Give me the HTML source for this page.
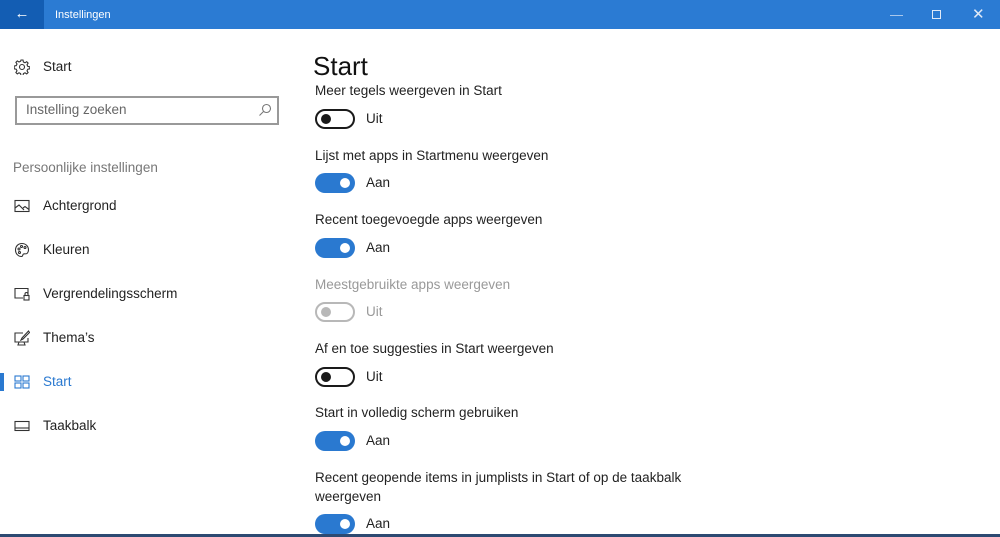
<!DOCTYPE html>
<html><head><meta charset="utf-8"><style>
*{margin:0;padding:0;box-sizing:border-box}
body{width:1000px;height:537px;overflow:hidden;background:#fff;font-family:"Liberation Sans",sans-serif;color:#222;position:relative}
.bar{position:absolute;left:0;top:0;width:1000px;height:29px;background:#2b7bd3}
.back{position:absolute;left:0;top:0;width:44px;height:29px;background:#135db3;color:#fff;font-size:15px;text-align:center;line-height:28px}
.title{position:absolute;left:55px;top:9px;color:#fff;font-size:11px}
.wc{position:absolute;top:0;height:29px;color:#dfe9f7;font-size:13px;line-height:29px}
.t{position:absolute;font-size:13.5px;white-space:nowrap}
.ic{position:absolute;left:14px}
.tg{position:absolute;left:315px;width:40px;height:20px;border-radius:10px}
.on{background:#2a79d0}
.on::after{content:"";position:absolute;right:5px;top:5px;width:10px;height:10px;border-radius:50%;background:#fff}
.off{border:2px solid #1a1a1a}
.off::after{content:"";position:absolute;left:4px;top:3px;width:10px;height:10px;border-radius:50%;background:#1a1a1a}
.dis{border:2px solid #b8b8b8}
.dis::after{content:"";position:absolute;left:4px;top:3px;width:10px;height:10px;border-radius:50%;background:#b8b8b8}
.st{position:absolute;left:366px;font-size:13.5px}
</style></head><body>
<div class="bar"></div>
<div class="back">&#8592;</div>
<div class="title">Instellingen</div>
<div class="wc" style="left:890px;color:#b9d2f0">&#8212;</div>
<div class="wc" style="left:932px;top:0"><div style="position:absolute;top:10px;left:0;width:9px;height:9px;border:1px solid #dfe9f7"></div></div>
<div class="wc" style="left:972px;font-size:15px">&#10005;</div>

<svg class="ic" style="top:59px" width="16" height="16" viewBox="0 0 16 16" fill="none" stroke="#333" stroke-width="1.1"><circle cx="8" cy="8" r="2.5"/><path d="M7 1h2l.4 2 1.6.8 1.7-1.1 1.4 1.4-1.1 1.7.8 1.6 2 .4v2l-2 .4-.8 1.6 1.1 1.7-1.4 1.4-1.7-1.1-1.6.8-.4 2H7l-.4-2-1.6-.8-1.7 1.1-1.4-1.4 1.1-1.7-.8-1.6-2-.4V7l2-.4.8-1.6-1.1-1.7 1.4-1.4 1.7 1.1 1.6-.8z"/></svg>
<div class="t" style="left:43px;top:59px">Start</div>
<div style="position:absolute;left:15px;top:96px;width:264px;height:29px;border:2px solid #999"></div>
<div class="t" style="left:26px;top:102px;color:#666">Instelling zoeken</div>
<svg style="position:absolute;left:258px;top:103px" width="14" height="14" viewBox="0 0 14 14" fill="none" stroke="#777" stroke-width="1.1"><circle cx="8.5" cy="5.5" r="4"/><path d="M5.5 8.5 1.5 12.5"/></svg>
<div class="t" style="left:13px;top:160px;color:#777">Persoonlijke instellingen</div>

<svg class="ic" style="top:199px" width="16" height="14" viewBox="0 0 16 14" fill="none" stroke="#333" stroke-width="1.1"><rect x="1" y="1.5" width="14" height="11"/><path d="M1 9l4-3 5 5M9 9l2-1.5 4 3"/></svg>
<div class="t" style="left:43px;top:198px">Achtergrond</div>
<svg class="ic" style="top:242px" width="16" height="16" viewBox="0 0 16 16" fill="none" stroke="#333" stroke-width="1.1"><path d="M8 1.5C4 1.5 1.5 4.5 1.5 8S4 14.5 7.5 14.5c1.5 0 1-2 2-2.5s3 .5 4-1 1-3 1-3C14.5 4 11.5 1.5 8 1.5z"/><circle cx="5" cy="7" r="1"/><circle cx="7.5" cy="4.5" r="1"/><circle cx="11" cy="5.5" r="1"/><circle cx="5.5" cy="10.5" r="1"/></svg>
<div class="t" style="left:43px;top:242px">Kleuren</div>
<svg class="ic" style="top:287px" width="16" height="14" viewBox="0 0 16 14" fill="none" stroke="#333" stroke-width="1.1"><path d="M9 11H1V1.5h13V7"/><rect x="10" y="8.5" width="5" height="4.5"/><path d="M11 8.5V7a1.5 1.5 0 0 1 3 0v1.5"/></svg>
<div class="t" style="left:43px;top:286px">Vergrendelingsscherm</div>
<svg class="ic" style="top:330px" width="16" height="16" viewBox="0 0 16 16" fill="none" stroke="#333" stroke-width="1.1"><path d="M9 3H1v9h13V8M5 12l-1 3h7l-1-3"/><path d="M14.5 1 8 8l-1 2 2-1 6.5-6.5z"/></svg>
<div class="t" style="left:43px;top:330px">Thema’s</div>
<div style="position:absolute;left:0;top:373px;width:4px;height:18px;background:#2a79d0"></div>
<svg class="ic" style="top:375px" width="16" height="14" viewBox="0 0 16 14" fill="none" stroke="#2a79d0" stroke-width="1.1"><rect x="1" y="1" width="6" height="5"/><rect x="9" y="1" width="6" height="5"/><rect x="1" y="8" width="6" height="5"/><rect x="9" y="8" width="6" height="5"/></svg>
<div class="t" style="left:43px;top:374px;color:#2a79d0">Start</div>
<svg class="ic" style="top:420px" width="16" height="12" viewBox="0 0 16 12" fill="none" stroke="#333" stroke-width="1.1"><rect x="1" y="1.5" width="14" height="9"/><path d="M1 8h14"/></svg>
<div class="t" style="left:43px;top:418px">Taakbalk</div>

<div style="position:absolute;left:313px;top:51px;font-size:26px;font-weight:300;color:#111">Start</div>

<div class="t" style="left:315px;top:83px">Meer tegels weergeven in Start</div>
<div class="tg off" style="top:109px"></div><div class="st" style="top:111px">Uit</div>
<div class="t" style="left:315px;top:148px">Lijst met apps in Startmenu weergeven</div>
<div class="tg on" style="top:173px"></div><div class="st" style="top:175px">Aan</div>
<div class="t" style="left:315px;top:212px">Recent toegevoegde apps weergeven</div>
<div class="tg on" style="top:238px"></div><div class="st" style="top:240px">Aan</div>
<div class="t" style="left:315px;top:277px;color:#999">Meestgebruikte apps weergeven</div>
<div class="tg dis" style="top:302px"></div><div class="st" style="top:304px;color:#999">Uit</div>
<div class="t" style="left:315px;top:341px">Af en toe suggesties in Start weergeven</div>
<div class="tg off" style="top:367px"></div><div class="st" style="top:369px">Uit</div>
<div class="t" style="left:315px;top:405px">Start in volledig scherm gebruiken</div>
<div class="tg on" style="top:431px"></div><div class="st" style="top:433px">Aan</div>
<div class="t" style="left:315px;top:470px">Recent geopende items in jumplists in Start of op de taakbalk</div>
<div class="t" style="left:315px;top:489px">weergeven</div>
<div class="tg on" style="top:514px"></div><div class="st" style="top:516px">Aan</div>
<div style="position:absolute;left:0;top:534px;width:1000px;height:3px;background:#2d4a72"></div>
</body></html>
